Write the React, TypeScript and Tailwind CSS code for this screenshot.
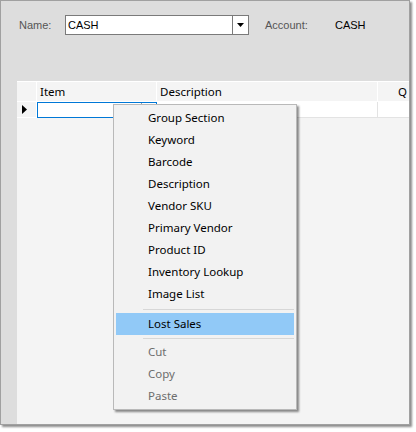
const menuItems = [
  'Group Section',
  'Keyword',
  'Barcode',
  'Description',
  'Vendor SKU',
  'Primary Vendor',
  'Product ID',
  'Inventory Lookup',
  'Image List',
];

const disabledItems = ['Cut', 'Copy', 'Paste'];

function ContextMenu() {
  return (
    <div className="absolute left-[113px] top-[104px] w-[184px] h-[306px] bg-[#f2f2f2] border border-[#b9b9b9] shadow-[2px_2px_2px_rgba(0,0,0,0.45)] px-[2px] py-[2px] font-['Noto_Sans',sans-serif] text-[11.5px] text-black">
      {menuItems.map(label => (
        <div key={label} className="h-[22px] flex items-center pl-[32px]">
          {label}
        </div>
      ))}
      <div className="h-[8px] flex items-center pl-[27px]">
        <div className="h-px w-full bg-[#d7d7d7]" />
      </div>
      <div className="h-[22px] flex items-center pl-[32px] bg-[#91c9f7]">Lost Sales</div>
      <div className="h-[6px] flex items-center pl-[27px]">
        <div className="h-px w-full bg-[#d7d7d7]" />
      </div>
      {disabledItems.map(label => (
        <div key={label} className="h-[22px] flex items-center pl-[32px] text-[#6d6d6d]">
          {label}
        </div>
      ))}
    </div>
  );
}

export default function App() {
  return (
    <div className="w-[416px] h-[432px] bg-white relative font-['Liberation_Sans',Arial,sans-serif]">
      <div className="w-[410px] h-[425px] border border-[#a0a0a0] bg-[#dddddd] shadow-[2px_2px_2px_rgba(0,0,0,0.45)] flex flex-col">
        {/* ヘッダー */}
        <div className="h-[80px] shrink-0 pt-[14px]">
          <div className="flex items-center h-[20px] text-[11px]">
            <span className="ml-[18px] w-[46px] text-[#555555]">Name:</span>
            <div className="w-[184px] h-[20px] bg-white border border-[#7a7a7a] flex">
              <div className="flex-1 pl-[2px] flex items-center text-black">CASH</div>
              <div className="w-[16px] border-l border-[#7a7a7a] flex items-center justify-center">
                <svg width="7" height="4" viewBox="0 0 7 4">
                  <path d="M0 0h7L3.5 4z" fill="#000" />
                </svg>
              </div>
            </div>
            <span className="ml-[16px] w-[70px] text-[#555555]">Account:</span>
            <span className="text-black">CASH</span>
          </div>
        </div>

        {/* グリッド */}
        <div className="flex-1 ml-[16px] bg-[#f4f4f4] flex flex-col overflow-hidden font-['Noto_Sans',sans-serif] text-[11.5px] text-black">
          <div className="h-[20px] flex shrink-0 border-t border-white">
            <div className="w-[20px] border-r border-white" />
            <div className="w-[120px] border-r border-white flex items-center pl-[3px]">Item</div>
            <div className="w-[221px] border-r border-white flex items-center pl-[3px]">Description</div>
            <div className="flex-1 flex items-center pl-[20px] overflow-hidden">Q</div>
          </div>
          <div className="h-[17px] flex shrink-0 border-t border-white">
            <div className="w-[20px] border-r border-b border-white flex items-center pl-[5px]">
              <svg width="5" height="9" viewBox="0 0 5 9">
                <path d="M0 0l5 4.5L0 9z" fill="#000" />
              </svg>
            </div>
            <div className="w-[120px] bg-white border border-[#0078d7] flex">
              <div className="flex-1" />
              <div className="w-[15px] border-l border-[#a0a0a0]" />
            </div>
            <div className="w-[221px] bg-white border-r border-b border-[#e3e3e3]" />
            <div className="flex-1 bg-white border-b border-[#e3e3e3]" />
          </div>
        </div>
      </div>
      <ContextMenu />
    </div>
  );
}
